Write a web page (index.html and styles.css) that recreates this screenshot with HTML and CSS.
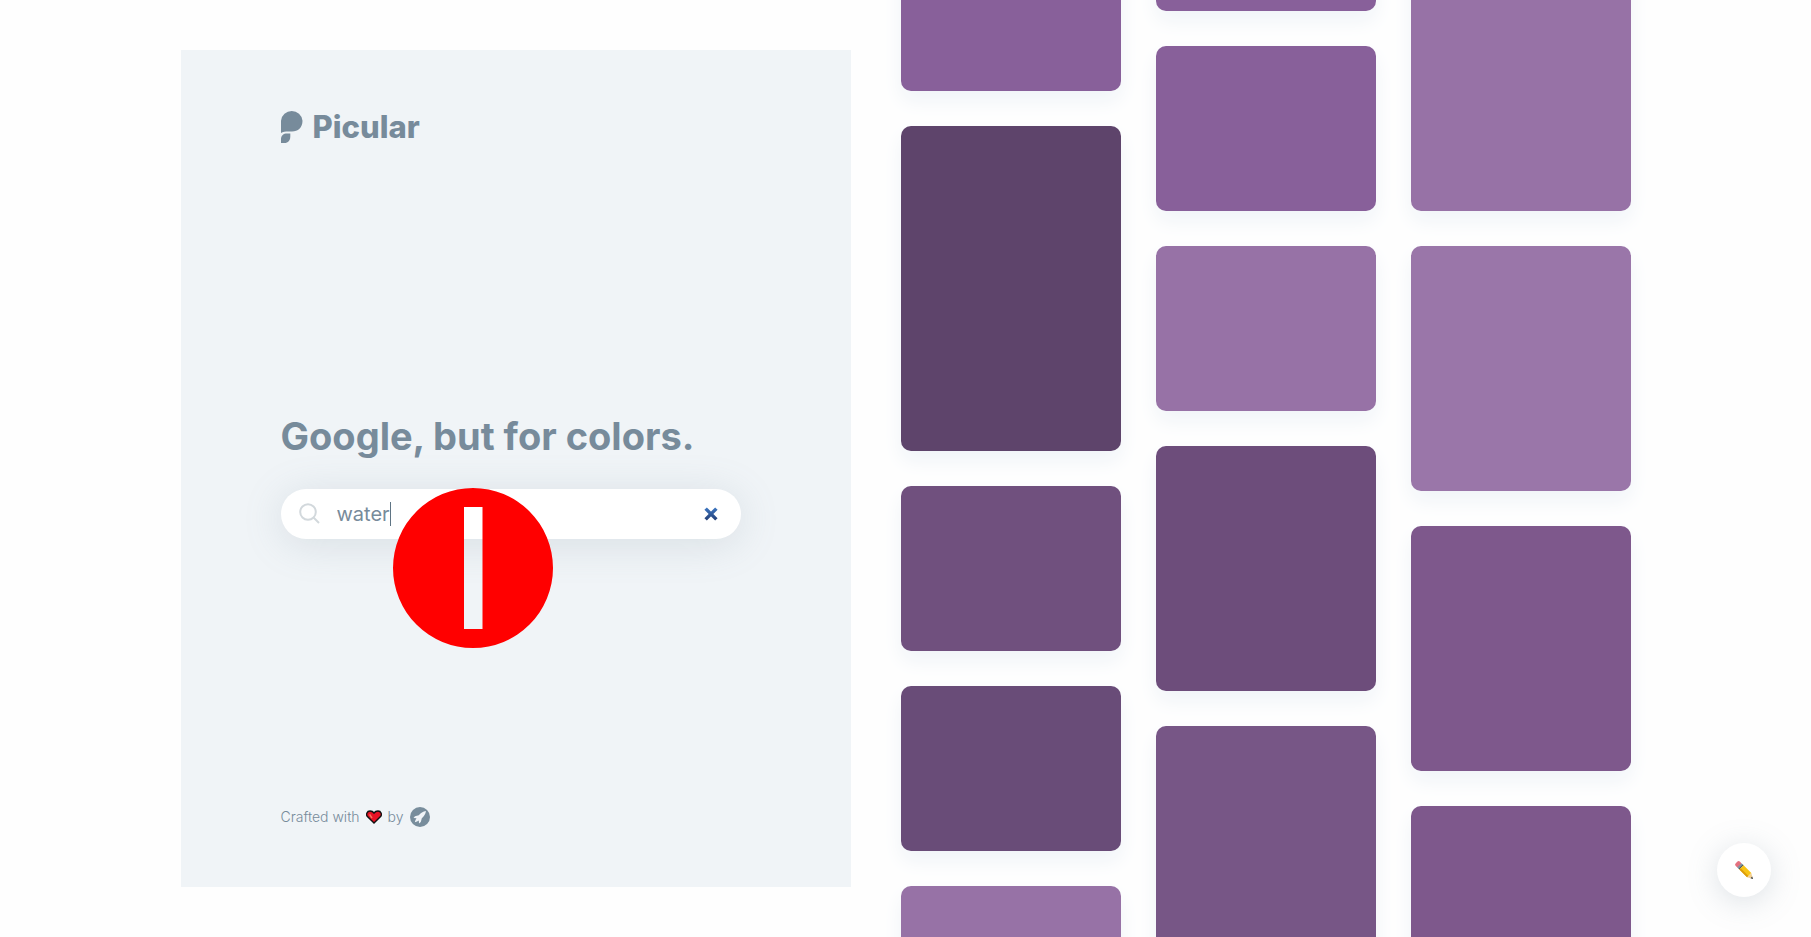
FILE: index.html
```html
<!DOCTYPE html>
<html lang="en">
<head>
  <meta charset="utf-8">
  <meta name="viewport" content="width=device-width, initial-scale=1">
  <title>Picular</title>
  <link rel="stylesheet" href="styles.css">
</head>
<body>
  <div class="page">
    <main class="panel">
      <a class="logo" href="#">
        <svg class="logo-mark" viewBox="0 0 22 33" aria-hidden="true">
          <path d="M0 22V10.700A10.800 10.700 0 0 1 21.500 10.700C21.500 17.500 17 21.500 11 21.500C6 21.300 2.500 21.300 0 23Z"/>
          <path d="M0 33V29C0 25.500 2.500 23.500 6 23.500H9.300V26.500C9.300 30.500 7 33 3.500 33Z"/>
        </svg>
        <span>Picular</span>
      </a>

      <section class="intro">
        <h1 class="title">Google, but for colors.</h1>
        <form class="search" role="search">
          <label class="search-label" for="query">
            <svg class="search-icon" viewBox="0 0 22 22" role="img" aria-label="Search colors">
              <circle cx="9" cy="9" r="7.800"/>
              <path d="M14.500 14.500L20 20"/>
            </svg>
          </label>
          <input class="search-input" id="query" type="text" value="water" autocomplete="off">
          <span class="caret"></span>
          <button class="clear" type="reset" aria-label="Clear">
            <svg viewBox="0 0 14 14" aria-hidden="true">
              <defs>
                <linearGradient id="blue" x1="0" y1="0" x2="0" y2="14" gradientUnits="userSpaceOnUse">
                  <stop offset="0" stop-color="#3f7dcb"/>
                  <stop offset="1" stop-color="#21386c"/>
                </linearGradient>
              </defs>
              <path d="M2.300 2.300L11.700 11.700M11.700 2.300L2.300 11.700" stroke="url(#blue)" stroke-width="3"/>
            </svg>
          </button>
          <svg class="cursor" viewBox="0 0 160 160" aria-hidden="true">
            <path fill-rule="evenodd" d="M80 0a80 80 0 1 1 0 160a80 80 0 1 1 0-160ZM71 19V141H89.500V19Z"/>
          </svg>
        </form>
      </section>

      <footer class="credits">
        <span>Crafted with</span>
        <svg class="heart" viewBox="0 0 16 14" aria-hidden="true">
          <path d="M8 13L1.200 6.300C0 4.500.800 1 4 1C6 1 7.200 1.900 8 3C8.800 1.900 10 1 12 1C15.200 1 16 4.500 14.800 6.300Z" fill="#e81224" stroke="#111" stroke-width="1.400"/>
          <path d="M3.600 4.300L6 8" stroke="#f4735f" stroke-width="1.500"/>
        </svg>
        <span>by</span>
        <a class="rocket" href="#" aria-label="Makers">
          <svg viewBox="0 0 20 20" aria-hidden="true">
            <circle cx="10" cy="10" r="10" fill="#788d9c"/>
            <path d="M16 4C13 4.500 10.500 6 8.800 8.200L5 9.200L3.500 11L6.500 11.200L5.500 13L4.800 15.200L7 14.500L8.800 13.500L9 16.500L10.800 15L11.800 11.200C14 9.500 15.500 7 16 4Z" fill="#f0f4f8"/>
          </svg>
        </a>
      </footer>
    </main>

    <section class="gallery" aria-label="Colors">
      <div class="column column-one">
        <div class="tile c1"></div>
        <div class="tile tall c2"></div>
        <div class="tile c3"></div>
        <div class="tile c4"></div>
        <div class="tile c5"></div>
      </div>
      <div class="column column-two">
        <div class="tile c1"></div>
        <div class="tile c1"></div>
        <div class="tile c5"></div>
        <div class="tile medium c6"></div>
        <div class="tile medium c7"></div>
      </div>
      <div class="column column-three">
        <div class="tile tall c5"></div>
        <div class="tile medium c8"></div>
        <div class="tile medium c9"></div>
        <div class="tile medium c9"></div>
      </div>
    </section>
  </div>

  <button class="edit" type="button" aria-label="Edit">
    <svg viewBox="0 0 18 18" aria-hidden="true">
      <g transform="translate(1.500 1.500) rotate(45)">
        <rect x="0" y="-3" width="5" height="6" rx="2" fill="#e4717f"/>
        <rect x="4" y="-3" width="3" height="6" fill="#8295a2"/>
        <rect x="6" y="-3" width="1" height="6" fill="#49545d"/>
        <path d="M7-3H18V3H7Z" fill="#f8c414"/>
        <path d="M7 1H18V3H7Z" fill="#dc9c0c"/>
        <path d="M18-3L23 0L18 3Z" fill="#f3cf93"/>
        <path d="M21-1.200L23.500 0L21 1.200Z" fill="#3d4348"/>
      </g>
    </svg>
  </button>
</body>
</html>
```
FILE: styles.css
```css
* {
  box-sizing: border-box;
}

body {
  margin: 0;
  height: 100vh;
  overflow: hidden;
  background: #fefefe;
  color: #778b9b;
  font-family: Inter, "Open Sans", sans-serif;
}

svg {
  display: block;
  fill: none;
}

.page {
  display: grid;
  grid-template-rows: minmax(0, 1fr);
  grid-template-columns: 670fr 730fr;
  gap: 50px;
  max-width: 1450px;
  height: 100vh;
  margin: 0 auto;
}

.panel {
  display: flex;
  flex-direction: column;
  justify-content: space-between;
  margin: 50px 0;
  padding: 60px 100px;
  background: #f0f4f7;
}

.logo {
  display: flex;
  align-items: center;
  gap: 10px;
  height: 33px;
  color: inherit;
  font-size: 31px;
  font-weight: 800;
  line-height: 33px;
  text-decoration: none;
}

.logo-mark {
  width: 22px;
  height: 33px;
  fill: currentColor;
}

.title {
  margin: 0 0 28px;
  font-size: 38px;
  font-weight: 700;
  line-height: 50px;
  white-space: nowrap;
}

.search {
  position: relative;
  display: flex;
  align-items: center;
  max-width: 460px;
  height: 50px;
  padding: 0 22px 0 18px;
  border-radius: 25px;
  background: #fff;
  box-shadow: 0 5px 40px rgba(119, 139, 155, 0.2);
}

.search-icon {
  width: 22px;
  height: 22px;
  stroke: #d2d8dc;
  stroke-width: 2;
}

.search-input {
  field-sizing: content;
  margin-left: 16px;
  padding: 0;
  border: 0;
  outline: 0;
  background: none;
  color: inherit;
  font: 400 20px/24px Inter, sans-serif;
}

.caret {
  width: 1px;
  height: 24px;
  background: #5f7484;
}

.clear {
  margin-left: auto;
  padding: 0;
  border: 0;
  background: none;
}

.clear svg {
  width: 16px;
  height: 16px;
}

.cursor {
  position: absolute;
  top: -1px;
  left: 112px;
  width: 160px;
  height: 160px;
  fill: #f00;
  pointer-events: none;
}

.credits {
  display: flex;
  align-items: center;
  gap: 6px;
  font-size: 14px;
  font-weight: 300;
  line-height: 20px;
}

.heart {
  width: 16px;
  height: 14px;
}

.rocket svg {
  width: 20px;
  height: 20px;
}

.gallery {
  display: grid;
  grid-template-columns: repeat(3, 1fr);
  gap: 35px;
}

.column {
  display: flex;
  flex-direction: column;
  gap: 35px;
}

.column-one {
  margin-top: -74px;
}

.column-two {
  margin-top: -154px;
}

.column-three {
  margin-top: -114px;
}

.tile {
  flex: none;
  height: 165px;
  border-radius: 10px;
  box-shadow: 0 10px 20px #f0f4f8;
}

.medium {
  height: 245px;
}

.tall {
  height: 325px;
}

.c1 { background: #88609a; }
.c2 { background: #5e446b; }
.c3 { background: #70507e; }
.c4 { background: #694c78; }
.c5 { background: #9772a6; }
.c6 { background: #6d4d7b; }
.c7 { background: #775686; }
.c8 { background: #9a76a9; }
.c9 { background: #7e588c; }

.edit {
  position: fixed;
  right: 40px;
  bottom: 40px;
  display: grid;
  place-items: center;
  width: 54px;
  height: 54px;
  padding: 0;
  border: 0;
  border-radius: 50%;
  background: #fff;
  box-shadow: 0 5px 30px rgba(119, 139, 155, 0.25);
}

.edit svg {
  width: 18px;
  height: 18px;
}
```
